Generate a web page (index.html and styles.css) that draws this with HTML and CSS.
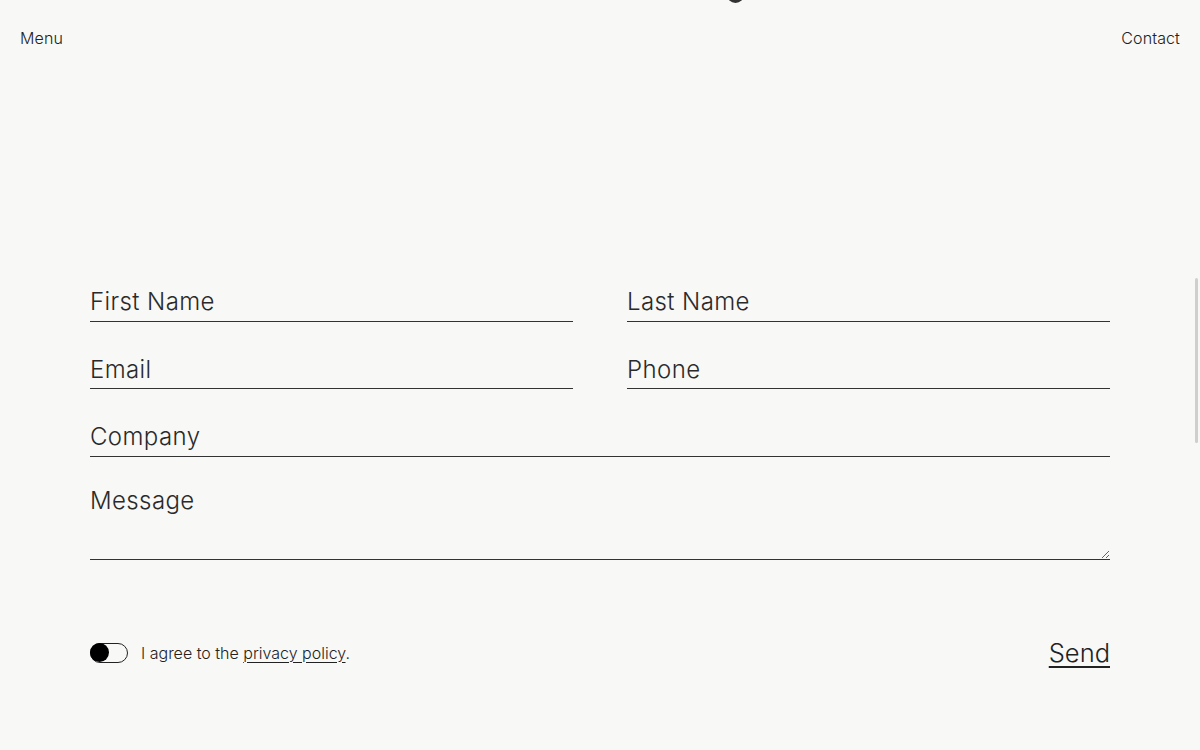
FILE: index.html
```html
<!DOCTYPE html>
<html lang="en">
<head>
<meta charset="utf-8">
<title>Contact</title>
<link rel="stylesheet" href="styles.css">
</head>
<body>
<div class="logo-peek"></div>
<header class="site-header">
  <a class="nav-link" href="#">Menu</a>
  <a class="nav-link" href="#">Contact</a>
</header>
<main class="contact">
  <form class="contact-form">
    <div class="row two">
      <input class="field" type="text" placeholder="First Name">
      <input class="field" type="text" placeholder="Last Name">
    </div>
    <div class="row two">
      <input class="field" type="email" placeholder="Email">
      <input class="field" type="tel" placeholder="Phone">
    </div>
    <div class="row">
      <input class="field" type="text" placeholder="Company">
    </div>
    <div class="row">
      <textarea class="field area" placeholder="Message"></textarea>
    </div>
    <div class="actions">
      <label class="agree">
        <span class="toggle"><span class="knob"></span></span>
        <span class="agree-text">I agree to the <a href="#">privacy policy</a>.</span>
      </label>
      <button class="send" type="button">Send</button>
    </div>
  </form>
</main>
<div class="scroll-thumb"></div>
</body>
</html>
```
FILE: styles.css
```css
html, body {
  margin: 0;
  padding: 0;
  background: #f8f8f6;
  color: #222;
  font-family: Inter, "Liberation Sans", Arial, sans-serif;
  font-weight: 300;
  height: 750px;
  overflow: hidden;
}

.logo-peek {
  position: absolute;
  top: -14px;
  left: 727px;
  width: 17px;
  height: 17px;
  border-radius: 50%;
  background: #333;
}

.site-header {
  display: flex;
  justify-content: space-between;
  padding: 29px 20px 0;
}

.nav-link {
  color: #222;
  text-decoration: none;
  font-size: 16px;
  line-height: 19px;
  letter-spacing: 0.1px;
}

.contact {
  padding: 233.5px 90px 0;
}

.contact-form {
  display: flex;
  flex-direction: column;
  gap: 27.5px;
}

.row {
  display: flex;
}

.row.two {
  gap: 54px;
}

.field {
  flex: 1;
  min-width: 0;
  box-sizing: border-box;
  height: 40px;
  margin: 0;
  padding: 1px 0 0;
  border: 0;
  border-bottom: 1px solid #333;
  background: transparent;
  font-family: inherit;
  font-weight: 300;
  font-size: 24px;
  letter-spacing: 0.4px;
  color: #222;
  outline: none;
}

.field::placeholder {
  color: #2a2a2a;
  opacity: 1;
}

.area {
  height: 76px;
  padding-top: 2px;
  line-height: 29px;
}

.actions {
  display: flex;
  justify-content: space-between;
  align-items: center;
  margin-top: 50px;
}

.agree {
  display: flex;
  align-items: center;
  gap: 13px;
  font-size: 16px;
}

.toggle {
  box-sizing: border-box;
  display: flex;
  align-items: center;
  width: 38px;
  height: 20px;
  border: 1.5px solid #222;
  border-radius: 10px;
}

.knob {
  width: 19px;
  height: 19px;
  margin-left: -1.5px;
  border-radius: 50%;
  background: #000;
}

.agree-text a {
  color: #222;
  text-decoration: underline;
  text-underline-offset: 3px;
  text-decoration-thickness: 1px;
}

.send {
  border: 0;
  padding: 0;
  background: none;
  color: #222;
  font-family: inherit;
  font-weight: 300;
  font-size: 25.5px;
  line-height: 30px;
  text-decoration: underline;
  text-underline-offset: 4px;
  text-decoration-thickness: 1.5px;
  cursor: pointer;
}

.scroll-thumb {
  position: fixed;
  right: 2px;
  top: 278px;
  width: 3px;
  height: 165px;
  background: #cfcfcd;
  border-radius: 2px;
}
```
